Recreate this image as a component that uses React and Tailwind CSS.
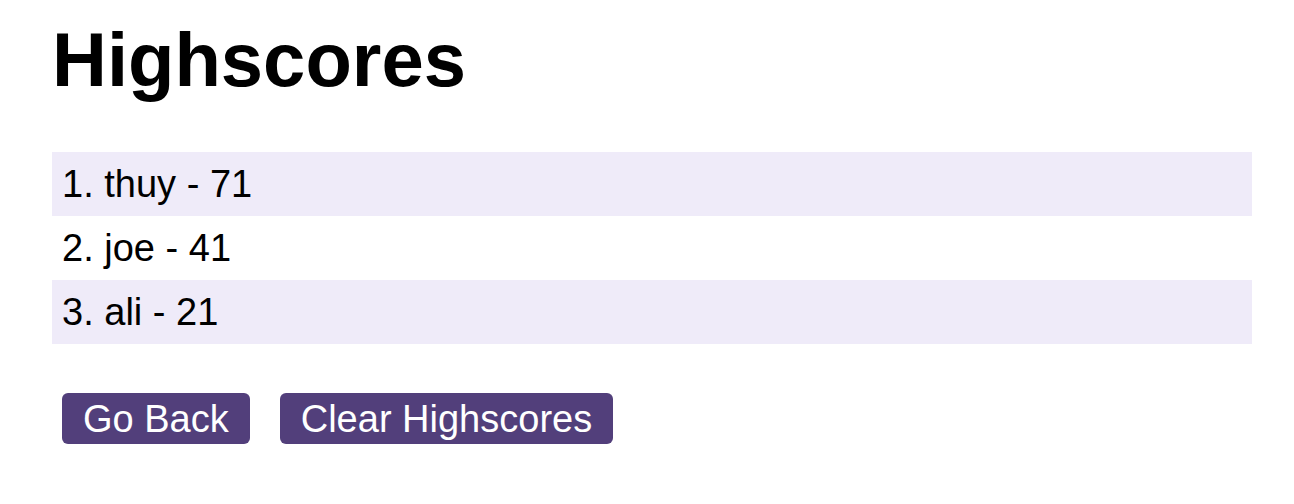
import React from "react";

const scores = [
  { name: "thuy", score: 71 },
  { name: "joe", score: 41 },
  { name: "ali", score: 21 },
];

const App = () => {
  return (
    <div className="min-h-screen bg-white px-[52px] pt-[17px] text-black" style={{ fontFamily: '"Liberation Sans", Arial, sans-serif' }}>
      <h1 className="text-[76px] font-bold leading-[85px]">
        Highscores
      </h1>

      {/* score list */}
      <ol className="mt-[50px] w-[1200px]">
        {scores.map((s, i) => (
          <li
            key={s.name}
            className={`h-16 flex items-center pl-[10px] text-[38px] ${i % 2 === 0 ? "bg-[#efebf9]" : "bg-white"}`}
          >
            {i + 1}. {s.name} - {s.score}
          </li>
        ))}
      </ol>

      <div className="mt-[49px] ml-[10px] flex gap-[30px]">
        <button className="h-[51px] px-[21px] rounded-md bg-[#523f7b] text-white text-[38px] leading-none">
          Go Back
        </button>
        <button className="h-[51px] px-[21px] rounded-md bg-[#523f7b] text-white text-[38px] leading-none">
          Clear Highscores
        </button>
      </div>
    </div>
  );
};

export default App;
